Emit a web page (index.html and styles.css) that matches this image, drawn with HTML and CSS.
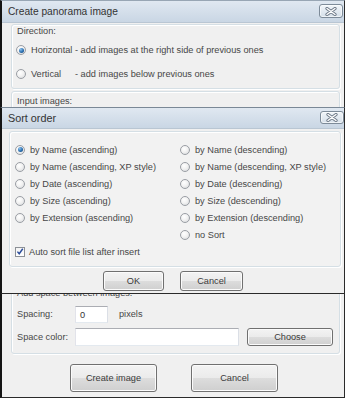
FILE: index.html
```html
<!DOCTYPE html>
<html>
<head>
<meta charset="utf-8">
<link rel="stylesheet" href="styles.css">
</head>
<body>
<div class="win">
  <div class="titlebar">
    <span class="title">Create panorama image</span>
    <span class="closebtn"><svg width="12" height="9" viewBox="0 0 12 9"><path d="M2 1.5 L10 7.5 M10 1.5 L2 7.5" stroke="#6b7785" stroke-width="3.2" stroke-linecap="round"/><path d="M2 1.5 L10 7.5 M10 1.5 L2 7.5" stroke="#ffffff" stroke-width="1.4" stroke-linecap="round"/></svg></span>
  </div>
  <div class="client">
    <div class="group g-dir">
      <div class="glabel">Direction:</div>
      <div class="opt"><span class="radio on"></span><span>Horizontal - add images at the right side of previous ones</span></div>
      <div class="opt"><span class="radio"></span><span class="vlabel">Vertical</span><span>- add images below previous ones</span></div>
    </div>
    <div class="group g-input">
      <div class="glabel">Input images:</div>
    </div>
    <div class="group g-space">
      <div class="glabel">Add space between images:</div>
      <div class="frow"><span class="flabel">Spacing:</span><span class="input small">0</span><span class="unit">pixels</span></div>
      <div class="frow second"><span class="flabel">Space color:</span><span class="input wide"></span><span class="btn choose">Choose</span></div>
    </div>
    <div class="actions"><span class="btn big">Create image</span><span class="btn big">Cancel</span></div>
  </div>

  <div class="sortdlg">
    <div class="titlebar small">
      <span class="title">Sort order</span>
      <span class="closebtn"><svg width="12" height="9" viewBox="0 0 12 9"><path d="M2 1.5 L10 7.5 M10 1.5 L2 7.5" stroke="#6b7785" stroke-width="3.2" stroke-linecap="round"/><path d="M2 1.5 L10 7.5 M10 1.5 L2 7.5" stroke="#ffffff" stroke-width="1.4" stroke-linecap="round"/></svg></span>
    </div>
    <div class="panel">
      <div class="sgrid">
        <div class="opt s"><span class="radio on"></span><span>by Name (ascending)</span></div>
        <div class="opt s"><span class="radio"></span><span>by Name (descending)</span></div>
        <div class="opt s"><span class="radio"></span><span>by Name (ascending, XP style)</span></div>
        <div class="opt s"><span class="radio"></span><span>by Name (descending, XP style)</span></div>
        <div class="opt s"><span class="radio"></span><span>by Date (ascending)</span></div>
        <div class="opt s"><span class="radio"></span><span>by Date (descending)</span></div>
        <div class="opt s"><span class="radio"></span><span>by Size (ascending)</span></div>
        <div class="opt s"><span class="radio"></span><span>by Size (descending)</span></div>
        <div class="opt s"><span class="radio"></span><span>by Extension (ascending)</span></div>
        <div class="opt s"><span class="radio"></span><span>by Extension (descending)</span></div>
        <div class="opt s"></div>
        <div class="opt s"><span class="radio"></span><span>no Sort</span></div>
        <div class="opt s"><span class="check"><svg width="9" height="9" viewBox="0 0 9 9"><path d="M1.6 4.6 L3.6 7 L7.6 1.4" fill="none" stroke="#2a4c9a" stroke-width="1.6"/></svg></span><span>Auto sort file list after insert</span></div>
      </div>
    </div>
    <div class="sactions"><span class="btn ok">OK</span><span class="btn cancel">Cancel</span></div>
  </div>
</div>
</body>
</html>
```
FILE: styles.css
```css
* { box-sizing: border-box; }
html, body { margin: 0; padding: 0; background: #ffffff; }
body {
  width: 348px;
  height: 400px;
  font-family: "Liberation Sans", Arial, sans-serif;
  font-size: 9.2px;
  color: #474747;
}
.win {
  position: relative;
  width: 345px;
  height: 398px;
  border-top: 1px solid #98a6b4;
  border-left: 2px solid #141414;
  border-right: 1px solid #2a2a2a;
  border-bottom: 1px solid #2a2a2a;
  background: #f0f0f0;
  display: flex;
  flex-direction: column;
}
.titlebar {
  height: 22px;
  flex: none;
  display: flex;
  align-items: flex-start;
  justify-content: space-between;
  padding-left: 6px;
  padding-right: 1px;
  background: linear-gradient(#e0e8f1, #c9d6e4);
  border-bottom: 1px solid #b9c6d3;
}
.title {
  font-size: 10.2px;
  color: #333333;
  line-height: 22px;
}
.closebtn {
  margin-top: 3px;
  width: 24px;
  height: 14px;
  border: 1px solid #7d8b99;
  border-radius: 3px;
  background: linear-gradient(#f1f5f9, #d5dfe9);
  display: flex;
  align-items: center;
  justify-content: center;
  box-shadow: inset 0 0 0 1px rgba(255,255,255,0.6);
}
.client {
  flex: 1;
  padding: 1px 4px 0 9px;
  display: flex;
  flex-direction: column;
}
.group {
  border: 1px solid #d5dfe5;
  border-radius: 3px;
  box-shadow: inset 1px 1px 0 #ffffff, 1px 1px 0 #ffffff;
  padding: 0 5px;
}
.glabel { height: 12px; line-height: 12px; }
.g-dir { height: 65px; }
.g-dir .opt { height: 22px; margin-top: 2px; }
.opt {
  display: flex;
  align-items: center;
  white-space: nowrap;
}
.radio {
  flex: none;
  width: 10px;
  height: 10px;
  border-radius: 50%;
  border: 1px solid #9a9ea4;
  background: radial-gradient(circle at 40% 35%, #ffffff 0%, #f2f2f2 45%, #d4d6d9 100%);
  margin-left: -1px;
  margin-right: 5px;
  position: relative;
}
.radio.on::after {
  content: "";
  position: absolute;
  left: 1.5px;
  top: 1.5px;
  width: 5px;
  height: 5px;
  border-radius: 50%;
  background: radial-gradient(circle at 35% 30%, #8cc2ee 0%, #2a6fb0 55%, #123f6e 100%);
}
.vlabel { width: 44px; }
.g-input {
  margin-top: 2px;
  height: 191px;
  padding-top: 3px;
}
.g-space {
  margin-top: 2px;
  height: 70px;
  padding-top: 2px;
}
.frow {
  display: flex;
  align-items: center;
  height: 18px;
  margin-top: 6px;
}
.frow.second { margin-top: 5px; }
.flabel { width: 58px; }
.input {
  height: 18px;
  background: #ffffff;
  border: 1px solid;
  border-color: #abadb3 #dbdfe6 #e3e9ef #e2e3ea;
  padding-left: 4px;
  line-height: 16px;
  color: #333;
}
.input.small { width: 33px; height: 17px; }
.input.wide { width: 164px; }
.unit { margin-left: 11px; }
.btn {
  display: flex;
  align-items: center;
  justify-content: center;
  border: 1px solid #707070;
  border-radius: 3px;
  background: linear-gradient(#f3f3f3 0%, #ebebeb 49%, #dddddd 50%, #cfcfcf 100%);
  box-shadow: inset 0 0 0 1px #fbfbfb;
  color: #3a3a3a;
}
.btn.choose { width: 86px; height: 18px; margin-left: 8px; }
.actions {
  display: flex;
  gap: 34px;
  margin-top: 10px;
  padding-left: 59px;
}
.btn.big { width: 87px; height: 28px; }

/* Sort order dialog overlay */
.sortdlg {
  position: absolute;
  left: -2px;
  top: 106px;
  width: 345px;
  height: 187px;
  border-top: 1px solid #7a8896;
  border-left: 2px solid #141414;
  border-right: 1px solid #2a2a2a;
  border-bottom: 1px solid #2a2a2a;
  background: #f0f0f0;
  display: flex;
  flex-direction: column;
}
.titlebar.small {
  height: 21px;
  padding-right: 0;
  border-bottom: 1px solid #b9c6d3;
}
.titlebar.small .title { line-height: 21px; font-size: 10.8px; }
.titlebar.small .closebtn { margin-top: 3px; height: 13px; }
.panel {
  margin: 2px 3px 0 7px;
  height: 136px;
  border: 1px solid #d5dfe5;
  border-radius: 3px;
  box-shadow: inset 1px 1px 0 #ffffff, 1px 1px 0 #ffffff;
  background: #f2f2f2;
  padding: 9px 0 0 6px;
}
.sgrid {
  display: grid;
  grid-template-columns: 165px 1fr;
  grid-auto-rows: 17px;
}
.check {
  flex: none;
  width: 10px;
  height: 10px;
  border: 1px solid #8c9096;
  background: linear-gradient(#f4f4f4, #ffffff);
  margin-left: -1px;
  margin-right: 4px;
  display: flex;
  align-items: center;
  justify-content: center;
}
.sactions {
  display: flex;
  justify-content: center;
  gap: 16px;
  margin-top: 4px;
}
.btn.ok { width: 61px; height: 20px; }
.btn.cancel { width: 63px; height: 20px; }
```
